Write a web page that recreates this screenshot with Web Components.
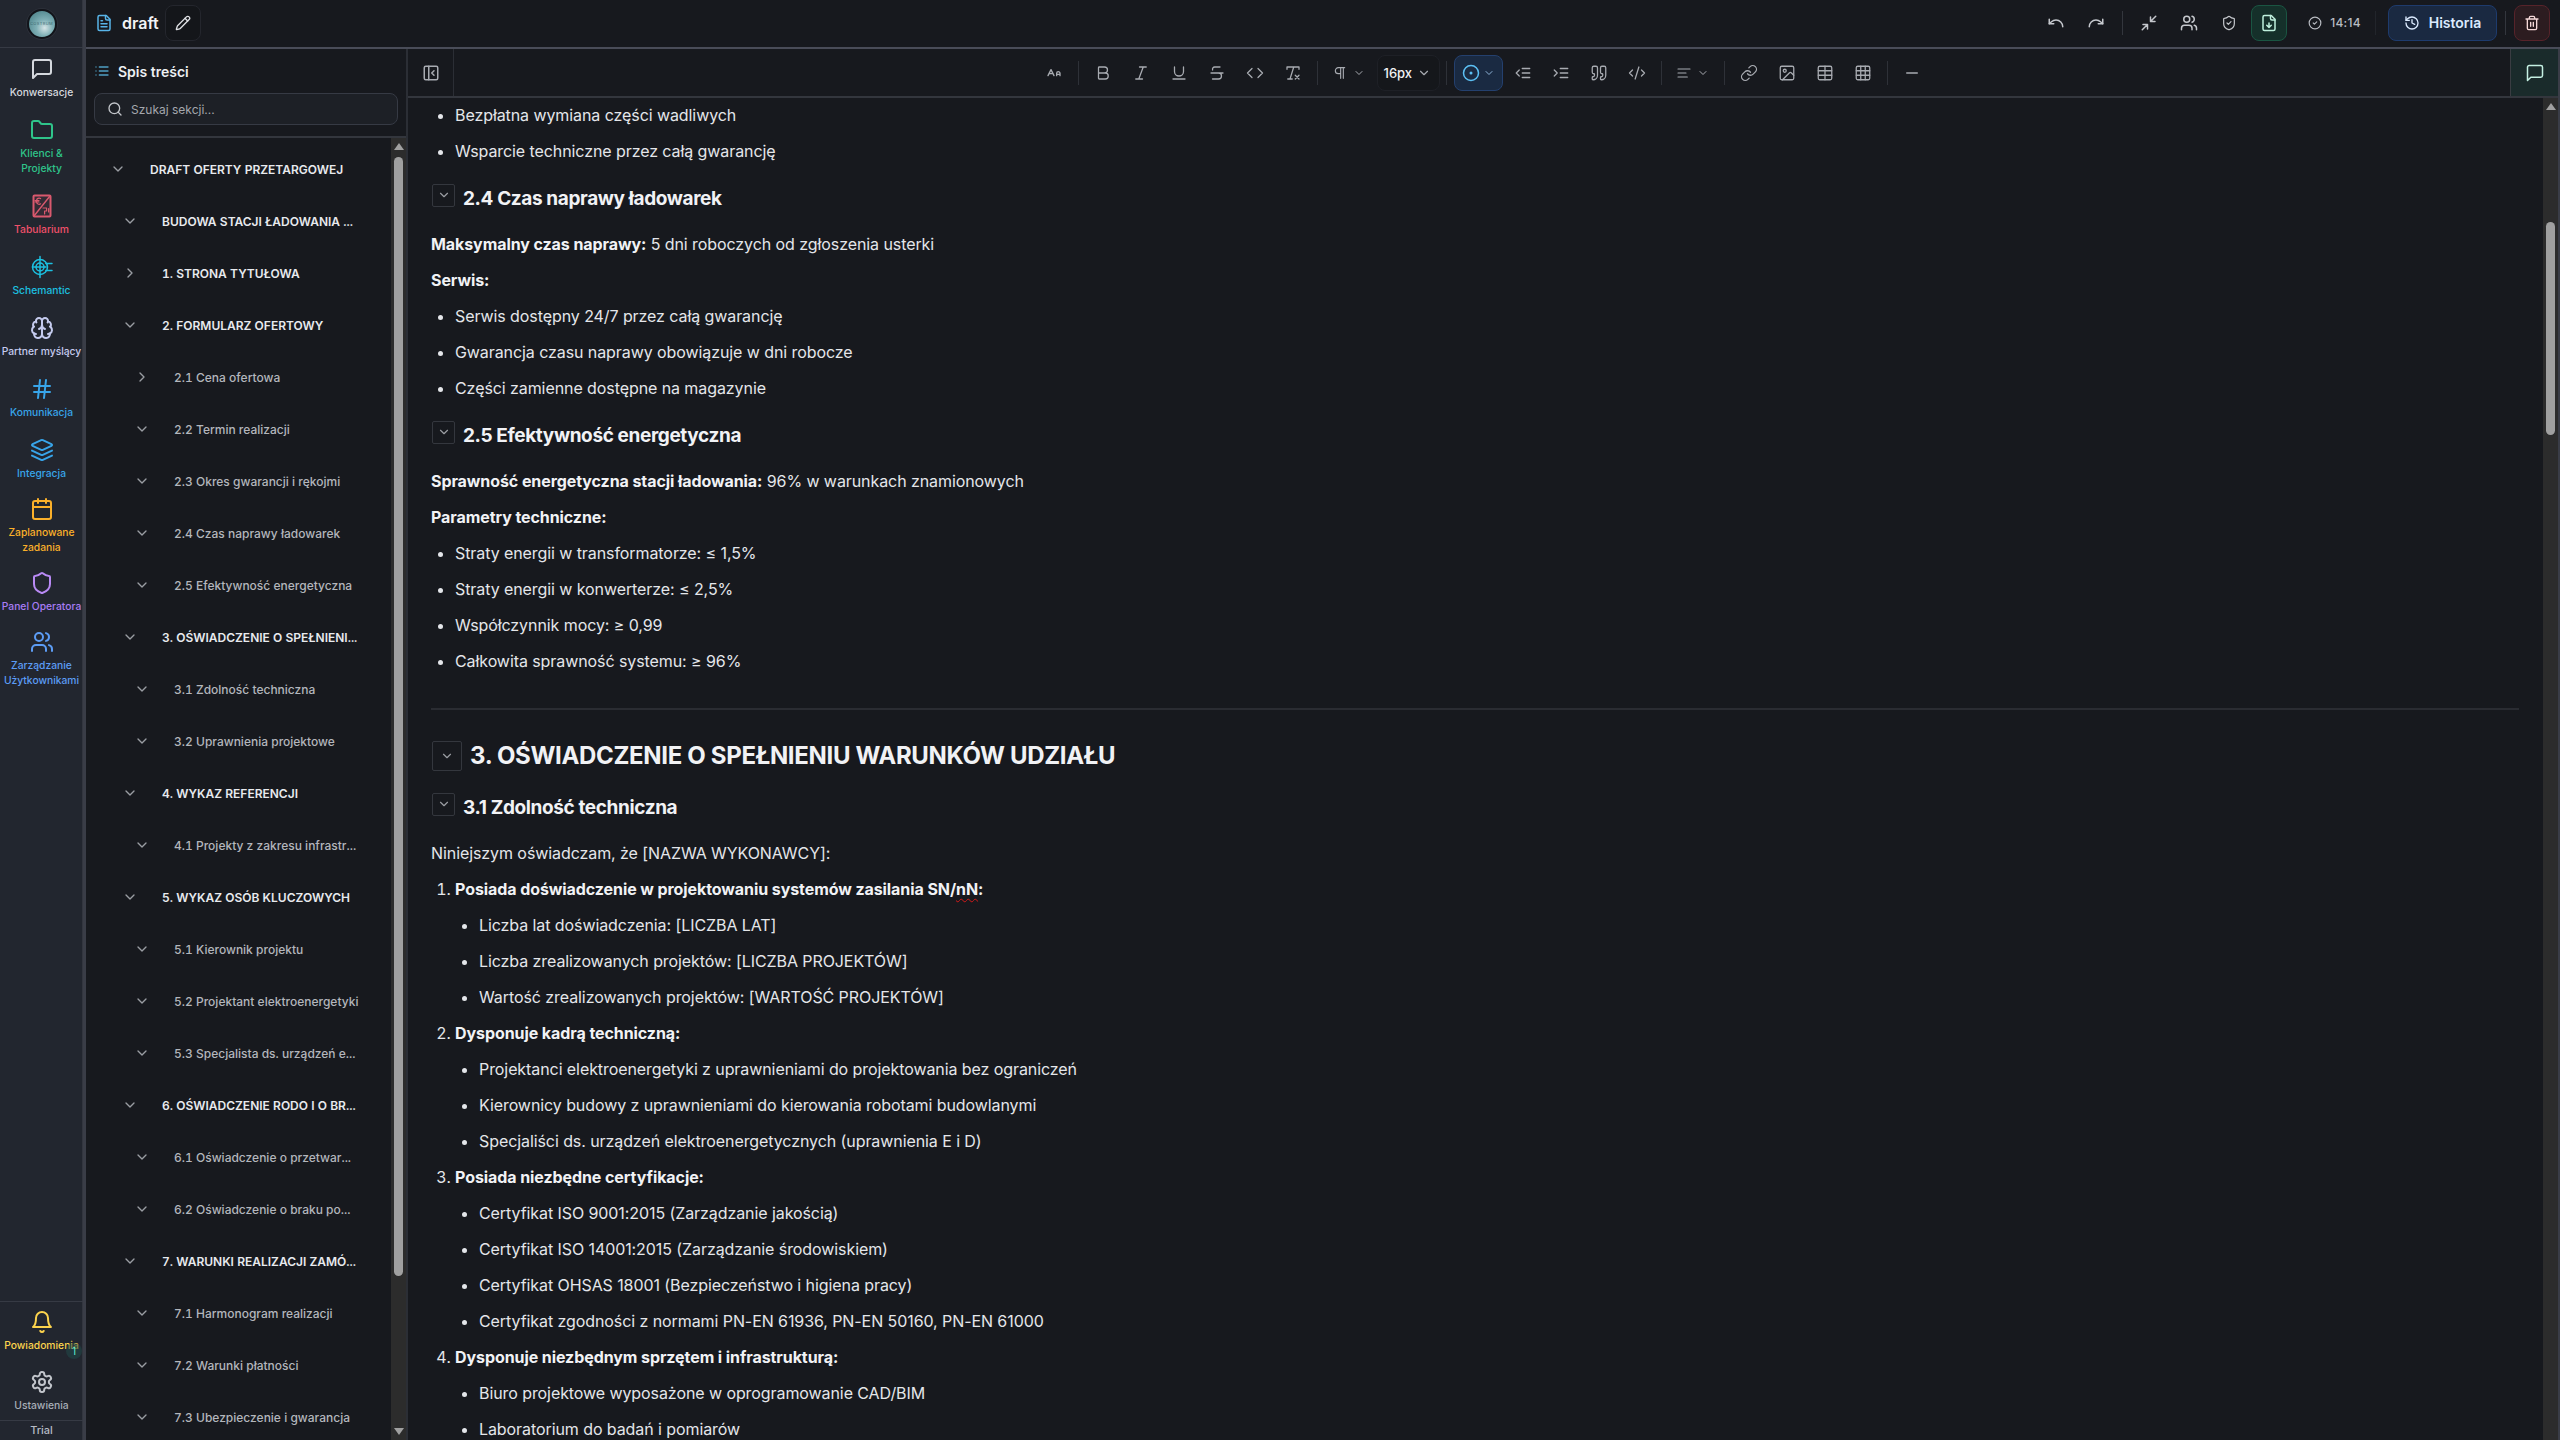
<!DOCTYPE html>
<html lang="pl">
<head>
<meta charset="utf-8">
<title>draft</title>
<style>
  html, body { margin: 0; padding: 0; background: #17191e; }
  body { font-family: Inter, "Noto Sans", sans-serif; }
</style>
</head>
<body>
<app-shell></app-shell>

<script>
const ICONS = {
  message: '<path d="M21 15a2 2 0 0 1-2 2H7l-4 4V5a2 2 0 0 1 2-2h14a2 2 0 0 1 2 2z"/>',
  folder: '<path d="M20 20a2 2 0 0 0 2-2V8a2 2 0 0 0-2-2h-7.9a2 2 0 0 1-1.69-.9L9.6 3.9A2 2 0 0 0 7.93 3H4a2 2 0 0 0-2 2v13a2 2 0 0 0 2 2Z"/>',
  tabularium: '<rect x="3.5" y="1.5" width="17" height="21" rx="1" fill="currentColor" fill-opacity=".1"/><path d="M20 2 4 22" stroke-width="1.4"/><path d="M10.6 4.6a2.6 2.6 0 0 0-4.1 2v1.2a2.6 2.6 0 0 0 4.1 2M5 6.6h4M5 8h4" stroke-width="1.2"/><path d="M13 14h3.6v3h-2v3M18.6 14.6v3.4" stroke-width="1.2"/>',
  schematic: '<circle cx="10" cy="12" r="7.5"/><circle cx="10" cy="12" r="4"/><path d="M10 1.5v21M2.5 12h13.5M15.8 8.5H22M15.8 15.5H22" />',
  brain: '<path d="M12 5a3 3 0 1 0-5.997.125 4 4 0 0 0-2.526 5.77 4 4 0 0 0 .556 6.588A4 4 0 1 0 12 18Z"/><path d="M12 5a3 3 0 1 1 5.997.125 4 4 0 0 1 2.526 5.77 4 4 0 0 1-.556 6.588A4 4 0 1 1 12 18Z"/><path d="M15 13a4.5 4.5 0 0 1-3-4 4.5 4.5 0 0 1-3 4"/><path d="M17.599 6.5a3 3 0 0 0 .399-1.375"/><path d="M6.003 5.125A3 3 0 0 0 6.401 6.5"/><path d="M3.477 10.896a4 4 0 0 1 .585-.396"/><path d="M19.938 10.5a4 4 0 0 1 .585.396"/><path d="M6 18a4 4 0 0 1-1.967-.516"/><path d="M19.967 17.484A4 4 0 0 1 18 18"/>',
  hash: '<path d="M4 9h16M4 15h16M10 3 8 21M16 3l-2 18"/>',
  layers: '<path d="M12.83 2.18a2 2 0 0 0-1.66 0L2.6 6.08a1 1 0 0 0 0 1.83l8.58 3.91a2 2 0 0 0 1.66 0l8.58-3.9a1 1 0 0 0 0-1.83Z"/><path d="m22 17.65-9.17 4.16a2 2 0 0 1-1.66 0L2 17.65"/><path d="m22 12.65-9.17 4.16a2 2 0 0 1-1.66 0L2 12.65"/>',
  calendar: '<rect x="3" y="4" width="18" height="18" rx="2"/><path d="M16 2v4M8 2v4M3 10h18"/>',
  shield: '<path d="M20 13c0 5-3.5 7.5-7.66 8.95a1 1 0 0 1-.67-.01C7.5 20.5 4 18 4 13V6a1 1 0 0 1 1-1c2 0 4.5-1.2 6.24-2.72a1.17 1.17 0 0 1 1.52 0C14.51 3.81 17 5 19 5a1 1 0 0 1 1 1z"/>',
  shieldCheck: '<path d="M20 13c0 5-3.5 7.5-7.66 8.95a1 1 0 0 1-.67-.01C7.5 20.5 4 18 4 13V6a1 1 0 0 1 1-1c2 0 4.5-1.2 6.24-2.72a1.17 1.17 0 0 1 1.52 0C14.51 3.81 17 5 19 5a1 1 0 0 1 1 1z"/><path d="m9 12 2 2 4-4"/>',
  users: '<path d="M16 21v-2a4 4 0 0 0-4-4H6a4 4 0 0 0-4 4v2"/><circle cx="9" cy="7" r="4"/><path d="M22 21v-2a4 4 0 0 0-3-3.87"/><path d="M16 3.13a4 4 0 0 1 0 7.75"/>',
  bell: '<path d="M6 8a6 6 0 0 1 12 0c0 7 3 9 3 9H3s3-2 3-9"/><path d="M10.3 21a1.94 1.94 0 0 0 3.4 0"/>',
  gear: '<path d="M12.22 2h-.44a2 2 0 0 0-2 2v.18a2 2 0 0 1-1 1.73l-.43.25a2 2 0 0 1-2 0l-.15-.08a2 2 0 0 0-2.73.73l-.22.38a2 2 0 0 0 .73 2.73l.15.1a2 2 0 0 1 1 1.72v.51a2 2 0 0 1-1 1.74l-.15.09a2 2 0 0 0-.73 2.73l.22.38a2 2 0 0 0 2.73.73l.15-.08a2 2 0 0 1 2 0l.43.25a2 2 0 0 1 1 1.73V20a2 2 0 0 0 2 2h.44a2 2 0 0 0 2-2v-.18a2 2 0 0 1 1-1.73l.43-.25a2 2 0 0 1 2 0l.15.08a2 2 0 0 0 2.73-.73l.22-.39a2 2 0 0 0-.73-2.73l-.15-.08a2 2 0 0 1-1-1.74v-.5a2 2 0 0 1 1-1.74l.15-.09a2 2 0 0 0 .73-2.73l-.22-.38a2 2 0 0 0-2.73-.73l-.15.08a2 2 0 0 1-2 0l-.43-.25a2 2 0 0 1-1-1.73V4a2 2 0 0 0-2-2z"/><circle cx="12" cy="12" r="3"/>',
  file: '<path d="M15 2H6a2 2 0 0 0-2 2v16a2 2 0 0 0 2 2h12a2 2 0 0 0 2-2V7Z"/><path d="M14 2v4a2 2 0 0 0 2 2h4"/><path d="M10 9H8M16 13H8M16 17H8"/>',
  fileDown: '<path d="M15 2H6a2 2 0 0 0-2 2v16a2 2 0 0 0 2 2h12a2 2 0 0 0 2-2V7Z"/><path d="M14 2v4a2 2 0 0 0 2 2h4"/><path d="M12 18v-6M9 15l3 3 3-3"/>',
  pencil: '<path d="M21.174 6.812a1 1 0 0 0-3.986-3.987L3.842 16.174a2 2 0 0 0-.5.83l-1.321 4.352a.5.5 0 0 0 .623.622l4.353-1.32a2 2 0 0 0 .83-.497z"/><path d="m15 5 4 4"/>',
  list: '<path d="M3 12h.01M3 18h.01M3 6h.01M8 12h13M8 18h13M8 6h13"/>',
  search: '<path d="m21 21-4.34-4.34"/><circle cx="11" cy="11" r="8"/>',
  down: '<path d="m6 9 6 6 6-6"/>',
  right: '<path d="m9 18 6-6-6-6"/>',
  undo: '<path d="M3 7v6h6"/><path d="M21 17a9 9 0 0 0-9-9 9 9 0 0 0-6 2.3L3 13"/>',
  redo: '<path d="M21 7v6h-6"/><path d="M3 17a9 9 0 0 1 9-9 9 9 0 0 1 6 2.3l3 2.7"/>',
  minimize: '<path d="m14 10 7-7M20 10h-6V4M3 21l7-7M4 14h6v6"/>',
  circleCheck: '<circle cx="12" cy="12" r="10"/><path d="m9 12 2 2 4-4"/>',
  history: '<path d="M3 12a9 9 0 1 0 9-9 9.75 9.75 0 0 0-6.74 2.74L3 8"/><path d="M3 3v5h5"/><path d="M12 7v5l4 2"/>',
  trash: '<path d="M3 6h18M19 6v14c0 1-1 2-2 2H7c-1 0-2-1-2-2V6M8 6V4c0-1 1-2 2-2h4c1 0 2 1 2 2v2M10 11v6M14 11v6"/>',
  panelClose: '<rect x="3" y="3" width="18" height="18" rx="2"/><path d="M9 3v18M16 15l-3-3 3-3"/>',
  fontSize: '<path d="M21 14h-5M16 16v-3.5a2.5 2.5 0 0 1 5 0V16M4.5 13h6M3 16l4.5-9 4.5 9"/>',
  bold: '<path d="M6 12h9a4 4 0 0 1 0 8H7a1 1 0 0 1-1-1V5a1 1 0 0 1 1-1h7a4 4 0 0 1 0 8"/>',
  italic: '<path d="M19 4h-9M14 20H5M15 4 9 20"/>',
  underline: '<path d="M6 4v6a6 6 0 0 0 12 0V4M4 20h16"/>',
  strike: '<path d="M16 4H9a3 3 0 0 0-2.83 4M14 12a4 4 0 0 1 0 8H6M4 12h16"/>',
  code: '<path d="m16 18 6-6-6-6M8 6l-6 6 6 6"/>',
  clear: '<path d="M4 7V4h16v3M5 20h6M13 4 8 20M15 15l5 5M20 15l-5 5"/>',
  pilcrow: '<path d="M13 4v16M17 4v16M19 4H9.5a4.5 4.5 0 0 0 0 9H13"/>',
  circleDot: '<circle cx="12" cy="12" r="10"/><circle cx="12" cy="12" r="1"/>',
  outdent: '<path d="M7 8l-4 4 4 4M21 12H11M21 6H11M21 18H11"/>',
  indent: '<path d="M3 8l4 4-4 4M21 12H11M21 6H11M21 18H11"/>',
  quote: '<path d="M16 3a2 2 0 0 0-2 2v6a2 2 0 0 0 2 2 1 1 0 0 1 1 1v1a2 2 0 0 1-2 2 1 1 0 0 0-1 1v2a1 1 0 0 0 1 1 6 6 0 0 0 6-6V5a2 2 0 0 0-2-2z"/><path d="M5 3a2 2 0 0 0-2 2v6a2 2 0 0 0 2 2 1 1 0 0 1 1 1v1a2 2 0 0 1-2 2 1 1 0 0 0-1 1v2a1 1 0 0 0 1 1 6 6 0 0 0 6-6V5a2 2 0 0 0-2-2z"/>',
  codeXml: '<path d="m18 16 4-4-4-4M6 8l-4 4 4 4M14.5 4l-5 16"/>',
  align: '<path d="M21 6H3M15 12H3M17 18H3"/>',
  link: '<path d="M10 13a5 5 0 0 0 7.54.54l3-3a5 5 0 0 0-7.07-7.07l-1.72 1.71"/><path d="M14 11a5 5 0 0 0-7.54-.54l-3 3a5 5 0 0 0 7.07 7.07l1.71-1.71"/>',
  image: '<rect x="3" y="3" width="18" height="18" rx="2"/><circle cx="9" cy="9" r="2"/><path d="m21 15-3.086-3.086a2 2 0 0 0-2.828 0L6 21"/>',
  table: '<rect x="3" y="3" width="18" height="18" rx="2"/><path d="M12 3v18M3 9h18M3 15h18"/>',
  grid: '<rect x="3" y="3" width="18" height="18" rx="2"/><path d="M3 9h18M3 15h18M9 3v18M15 3v18"/>',
  minus: '<path d="M5 12h14"/>',
};

class UiIcon extends HTMLElement {
  constructor() {
    super();
    this.attachShadow({ mode: 'open' });
  }

  connectedCallback() {
    const size = this.getAttribute('size') || 18;
    const width = this.getAttribute('stroke') || 2;
    const color = this.getAttribute('color') || 'currentColor';
    this.shadowRoot.innerHTML = `
      <style>
        :host { display: inline-flex; flex: none; color: ${color}; }
        svg { display: block; fill: none; stroke: currentColor; stroke-linecap: round; stroke-linejoin: round; }
      </style>
      <svg xmlns="http://www.w3.org/2000/svg" viewBox="0 0 24 24" width="${size}" height="${size}" stroke-width="${width}">${ICONS[this.getAttribute('name')] || ''}</svg>`;
  }
}
customElements.define('ui-icon', UiIcon);

class RailItem extends HTMLElement {
  constructor() {
    super();
    this.attachShadow({ mode: 'open' });
  }

  connectedCallback() {
    const color = this.getAttribute('color');
    const iconColor = this.getAttribute('icon-color') || color;
    const stroke = this.getAttribute('icon-stroke') || 2;
    this.shadowRoot.innerHTML = `
      <style>
        :host {
          display: flex;
          flex-direction: column;
          align-items: center;
          position: relative;
          padding: 9px 0 9px;
          color: ${color};
        }
        :host([tight]) { padding-bottom: 7px; }
        :host([lifted]) { padding: 8px 0; }
        ui-icon { margin-bottom: 4px; }
        .label {
          font-size: 10.3px;
          font-weight: 500;
          line-height: 15px;
          text-align: center;
          white-space: pre;
        }
      </style>
      <ui-icon name="${this.getAttribute('icon')}" size="24" stroke="${stroke}" color="${iconColor}"></ui-icon>
      <div class="label">${this.getAttribute('label')}</div>
      <slot></slot>`;
  }
}
customElements.define('rail-item', RailItem);

const railTemplate = document.createElement('template');
railTemplate.innerHTML = `
  <style>
    :host {
      display: flex;
      flex-direction: column;
      flex: none;
      box-sizing: border-box;
      width: 86px;
      height: 1440px;
      background: #22262f;
      border-right: 3px solid #3a3d47;
      box-shadow: inset -1px 0 0 #33363f;
    }
    .logo-cell {
      display: flex;
      align-items: center;
      justify-content: center;
      height: 47px;
      border-bottom: 1px solid #363a44;
      flex: none;
    }
    .logo {
      display: flex;
      align-items: center;
      justify-content: center;
      width: 26px;
      height: 26px;
      border-radius: 50%;
      border: 2px solid #12141a;
      box-shadow: 0 0 0 1px #2c3039;
      background: radial-gradient(circle at 60% 65%, #d6e4e6 0, #7fb0b6 35%, #5c9198 70%, #4a7c84 100%);
      font-size: 4px;
      letter-spacing: .4px;
      color: #3f6c74;
      overflow: hidden;
    }
    .bottom { margin-top: auto; border-top: 1px solid #363a44; }
    .trial {
      height: 19px;
      line-height: 19px;
      border-top: 1px solid #363a44;
      text-align: center;
      font-size: 11px;
      font-weight: 500;
      color: #b5bac3;
    }
    .badge {
      position: absolute;
      right: 1px;
      top: 41px;
      width: 16px;
      height: 16px;
      border-radius: 50%;
      background: rgba(32, 72, 72, .55);
      color: #5eead4;
      font-size: 10px;
      line-height: 16px;
      text-align: center;
    }
  </style>
  <div class="logo-cell"><div class="logo">COSTRUM</div></div>
  <rail-item icon="message" label="Konwersacje" color="#d5d8de"></rail-item>
  <rail-item icon="folder" label="Klienci &amp;&#10;Projekty" color="#2fc48a"></rail-item>
  <rail-item icon="tabularium" label="Tabularium" color="#f0506a" icon-color="#d9596e"></rail-item>
  <rail-item icon="schematic" icon-stroke="1.5" label="Schemantic" color="#1cc0e0"></rail-item>
  <rail-item icon="brain" label="Partner myślący" color="#c5cbee"></rail-item>
  <rail-item icon="hash" label="Komunikacja" color="#38a5ea"></rail-item>
  <rail-item tight icon="layers" label="Integracja" color="#38a5ea"></rail-item>
  <rail-item tight icon="calendar" label="Zaplanowane&#10;zadania" color="#fbb02a"></rail-item>
  <rail-item tight icon="shield" label="Panel Operatora" color="#a87cf5" icon-color="#b98af5"></rail-item>
  <rail-item tight icon="users" label="Zarządzanie&#10;Użytkownikami" color="#5c9cf5"></rail-item>
  <div class="bottom">
    <rail-item lifted icon="bell" label="Powiadomienia" color="#fcd34d"><span class="badge">1</span></rail-item>
    <rail-item tight icon="gear" label="Ustawienia" color="#a8aeb8" icon-color="#c2c5cb"></rail-item>
    <div class="trial">Trial</div>
  </div>
`;

class NavRail extends HTMLElement {
  constructor() {
    super();
    this.attachShadow({ mode: 'open' });
    this.shadowRoot.appendChild(railTemplate.content.cloneNode(true));
  }
}
customElements.define('nav-rail', NavRail);

const topBarTemplate = document.createElement('template');
topBarTemplate.innerHTML = `
  <style>
    :host {
      display: flex;
      align-items: center;
      flex: none;
      box-sizing: border-box;
      height: 49px;
      padding: 0 10px 2px 9px;
      gap: 4px;
      background: #17191e;
      border-bottom: 2px solid #494c58;
      color: #c5c8cd;
    }
    .title { margin: 0 2px 0 5px; font-size: 16px; font-weight: 600; color: #f2f3f5; }
    .btn {
      display: flex;
      align-items: center;
      justify-content: center;
      box-sizing: border-box;
      width: 36px;
      height: 36px;
      border-radius: 8px;
      border: 1px solid transparent;
    }
    .pencil { background: #14161a; border-color: #24262d; color: #dfe1e5; }
    .save { background: #15302a; border-color: #1a5542; color: #bff0dd; }
    .danger { background: #2c1c20; border-color: #57232a; color: #f5d8d8; }
    .spacer { flex: 1; }
    .sep { width: 1px; height: 24px; margin: 0 4px; background: #33363d; }
    .sep.faint { background: #22252b; margin: 0 4px 0 10px; }
    .time {
      display: flex;
      align-items: center;
      gap: 8px;
      margin-left: 17px;
      font-size: 12px;
      font-weight: 500;
      letter-spacing: .3px;
      color: #b9bcc2;
    }
    .history {
      display: flex;
      align-items: center;
      justify-content: center;
      gap: 9px;
      box-sizing: border-box;
      width: 109px;
      height: 36px;
      margin-left: 4px;
      border-radius: 8px;
      background: #1a2941;
      border: 1px solid #1e3b6d;
      color: #dbeafe;
      font-size: 14px;
      font-weight: 600;
    }
  </style>
  <ui-icon name="file" size="18" color="#58b4e8"></ui-icon>
  <span class="title">draft</span>
  <div class="btn pencil"><ui-icon name="pencil" size="16"></ui-icon></div>
  <div class="spacer"></div>
  <div class="btn"><ui-icon name="undo" size="18"></ui-icon></div>
  <div class="btn"><ui-icon name="redo" size="18"></ui-icon></div>
  <div class="sep"></div>
  <div class="btn"><ui-icon name="minimize" size="18"></ui-icon></div>
  <div class="btn"><ui-icon name="users" size="18"></ui-icon></div>
  <div class="btn"><ui-icon name="shieldCheck" size="16" stroke="1.8"></ui-icon></div>
  <div class="btn save"><ui-icon name="fileDown" size="18"></ui-icon></div>
  <div class="time"><ui-icon name="circleCheck" size="14"></ui-icon><span>14:14</span></div>
  <div class="sep faint"></div>
  <div class="history"><ui-icon name="history" size="16"></ui-icon><span>Historia</span></div>
  <div class="sep"></div>
  <div class="btn danger"><ui-icon name="trash" size="16"></ui-icon></div>
`;

class TopBar extends HTMLElement {
  constructor() {
    super();
    this.attachShadow({ mode: 'open' });
    this.shadowRoot.appendChild(topBarTemplate.content.cloneNode(true));
  }
}
customElements.define('top-bar', TopBar);

class ScrollTrack extends HTMLElement {
  constructor() {
    super();
    this.attachShadow({ mode: 'open' });
  }

  connectedCallback() {
    const top = this.getAttribute('thumb-top');
    const height = this.getAttribute('thumb-height');
    const showDown = this.hasAttribute('down');
    this.shadowRoot.innerHTML = `
      <style>
        :host {
          display: flex;
          flex-direction: column;
          align-items: center;
          flex: none;
          width: 15px;
          background: #2c2c2c;
        }
        .up, .dn { width: 0; height: 0; border-left: 5px solid transparent; border-right: 5px solid transparent; flex: none; }
        .up { margin-top: 5px; border-bottom: 7px solid #a0a0a0; }
        .dn { margin-top: auto; margin-bottom: 5px; border-top: 7px solid #a0a0a0; }
        .thumb { width: 9px; flex: none; margin-top: ${top}px; height: ${height}px; border-radius: 5px; background: #a0a0a0; }
      </style>
      <div class="up"></div>
      <div class="thumb"></div>
      ${showDown ? '<div class="dn"></div>' : ''}`;
  }
}
customElements.define('scroll-track', ScrollTrack);

class TocRow extends HTMLElement {
  constructor() {
    super();
    this.attachShadow({ mode: 'open' });
  }

  connectedCallback() {
    const level = Number(this.getAttribute('level'));
    const strong = level < 2;
    this.shadowRoot.innerHTML = `
      <style>
        :host {
          display: flex;
          align-items: center;
          gap: 24px;
          height: 52px;
          padding-left: ${24 + level * 12}px;
          font-size: 12px;
          font-weight: ${strong ? 600 : 500};
          font-variant-numeric: tabular-nums;
          color: ${strong ? '#e8eaee' : '#b3b6bc'};
          white-space: nowrap;
        }
        ui-icon { color: #9a9da3; }
      </style>
      <ui-icon name="${this.hasAttribute('closed') ? 'right' : 'down'}" size="16"></ui-icon>
      <slot></slot>`;
  }
}
customElements.define('toc-row', TocRow);

const tocTemplate = document.createElement('template');
tocTemplate.innerHTML = `
  <style>
    :host {
      display: flex;
      flex-direction: column;
      flex: none;
      box-sizing: border-box;
      width: 322px;
      height: 1391px;
      border-right: 2px solid #2b2e35;
      background: #17191e;
      overflow: hidden;
    }
    .head {
      flex: none;
      box-sizing: border-box;
      height: 89px;
      padding: 0 8px;
      border-bottom: 2px solid #33363d;
    }
    .title {
      display: flex;
      align-items: center;
      gap: 8px;
      height: 44px;
      font-size: 14px;
      font-weight: 600;
      color: #eef0f3;
    }
    .search {
      display: flex;
      align-items: center;
      gap: 8px;
      box-sizing: border-box;
      height: 32px;
      padding-left: 12px;
      border: 1px solid #363a44;
      border-radius: 8px;
      background: #1d2026;
      font-size: 12px;
      color: #a4a7ad;
    }
    .body { display: flex; flex: 1; min-height: 0; }
    .tree { flex: 1; padding-top: 5px; overflow: hidden; }
  </style>
  <div class="head">
    <div class="title"><ui-icon name="list" size="16" color="#4f9fc4"></ui-icon><span>Spis treści</span></div>
    <div class="search"><ui-icon name="search" size="16" color="#c2c5ca"></ui-icon><span>Szukaj sekcji...</span></div>
  </div>
  <div class="body">
    <div class="tree">
      <toc-row level="0">DRAFT OFERTY PRZETARGOWEJ</toc-row>
      <toc-row level="1">BUDOWA STACJI ŁADOWANIA ...</toc-row>
      <toc-row level="1" closed>1. STRONA TYTUŁOWA</toc-row>
      <toc-row level="1">2. FORMULARZ OFERTOWY</toc-row>
      <toc-row level="2" closed>2.1 Cena ofertowa</toc-row>
      <toc-row level="2">2.2 Termin realizacji</toc-row>
      <toc-row level="2">2.3 Okres gwarancji i rękojmi</toc-row>
      <toc-row level="2">2.4 Czas naprawy ładowarek</toc-row>
      <toc-row level="2">2.5 Efektywność energetyczna</toc-row>
      <toc-row level="1">3. OŚWIADCZENIE O SPEŁNIENI...</toc-row>
      <toc-row level="2">3.1 Zdolność techniczna</toc-row>
      <toc-row level="2">3.2 Uprawnienia projektowe</toc-row>
      <toc-row level="1">4. WYKAZ REFERENCJI</toc-row>
      <toc-row level="2">4.1 Projekty z zakresu infrastr...</toc-row>
      <toc-row level="1">5. WYKAZ OSÓB KLUCZOWYCH</toc-row>
      <toc-row level="2">5.1 Kierownik projektu</toc-row>
      <toc-row level="2">5.2 Projektant elektroenergetyki</toc-row>
      <toc-row level="2">5.3 Specjalista ds. urządzeń e...</toc-row>
      <toc-row level="1">6. OŚWIADCZENIE RODO I O BR...</toc-row>
      <toc-row level="2">6.1 Oświadczenie o przetwar...</toc-row>
      <toc-row level="2">6.2 Oświadczenie o braku po...</toc-row>
      <toc-row level="1">7. WARUNKI REALIZACJI ZAMÓ...</toc-row>
      <toc-row level="2">7.1 Harmonogram realizacji</toc-row>
      <toc-row level="2">7.2 Warunki płatności</toc-row>
      <toc-row level="2">7.3 Ubezpieczenie i gwarancja</toc-row>
    </div>
    <scroll-track thumb-top="7" thumb-height="1119" down></scroll-track>
  </div>
`;

class TocPanel extends HTMLElement {
  constructor() {
    super();
    this.attachShadow({ mode: 'open' });
    this.shadowRoot.appendChild(tocTemplate.content.cloneNode(true));
  }
}
customElements.define('toc-panel', TocPanel);

const toolbarTemplate = document.createElement('template');
toolbarTemplate.innerHTML = `
  <style>
    :host {
      display: flex;
      align-items: center;
      flex: none;
      box-sizing: border-box;
      height: 49px;
      border-bottom: 2px solid #33363d;
      background: #17191e;
      color: #a8abb1;
    }
    .toggle {
      display: flex;
      align-items: center;
      justify-content: center;
      flex: none;
      box-sizing: border-box;
      width: 46px;
      height: 47px;
      border-right: 1px solid #2b2e35;
    }
    .tools {
      display: flex;
      align-items: center;
      justify-content: center;
      gap: 2px;
      flex: 1;
      padding-left: 1px;
    }
    .b {
      display: flex;
      align-items: center;
      justify-content: center;
      flex: none;
      box-sizing: border-box;
      width: 36px;
      height: 36px;
      border-radius: 8px;
    }
    .sep { flex: none; width: 1px; height: 24px; margin: 0 4px; background: #2e3138; }
    .menu { width: 50px; justify-content: flex-start; padding-left: 8px; gap: 5px; }
    .size {
      width: 63px;
      margin-left: 1px;
      justify-content: flex-start;
      padding-left: 6px;
      gap: 5px;
      background: #15171b;
      border: 1px solid #1e2026;
      font-size: 13px;
      font-weight: 500;
    }
    .size span { color: #f1f2f4; }
    .active {
      width: 49px;
      margin-left: 1px;
      gap: 3px;
      border: 1px solid #24406e;
      background: #1a2a42;
      color: #8fb4d8;
    }
    .comment {
      display: flex;
      align-items: center;
      justify-content: center;
      flex: none;
      box-sizing: border-box;
      width: 48px;
      height: 47px;
      border-left: 1px solid #3a3d42;
      background: #1a2b2b;
    }
  </style>
  <div class="toggle"><ui-icon name="panelClose" size="18"></ui-icon></div>
  <div class="tools">
    <div class="b"><ui-icon name="fontSize" size="16"></ui-icon></div>
    <div class="sep"></div>
    <div class="b"><ui-icon name="bold" size="18" stroke="1.7"></ui-icon></div>
    <div class="b"><ui-icon name="italic" size="18" stroke="1.7"></ui-icon></div>
    <div class="b"><ui-icon name="underline" size="18" stroke="1.7"></ui-icon></div>
    <div class="b"><ui-icon name="strike" size="18" stroke="1.7"></ui-icon></div>
    <div class="b"><ui-icon name="code" size="18" stroke="1.7"></ui-icon></div>
    <div class="b"><ui-icon name="clear" size="18" stroke="1.7"></ui-icon></div>
    <div class="sep"></div>
    <div class="b menu"><ui-icon name="pilcrow" size="16" stroke="1.7"></ui-icon><ui-icon name="down" size="12"></ui-icon></div>
    <div class="b size"><span>16px</span><ui-icon name="down" size="14"></ui-icon></div>
    <div class="sep"></div>
    <div class="b active"><ui-icon name="circleDot" size="18" color="#5cc0f5"></ui-icon><ui-icon name="down" size="12"></ui-icon></div>
    <div class="b"><ui-icon name="outdent" size="18" stroke="1.7"></ui-icon></div>
    <div class="b"><ui-icon name="indent" size="18" stroke="1.7"></ui-icon></div>
    <div class="b"><ui-icon name="quote" size="18" stroke="1.7"></ui-icon></div>
    <div class="b"><ui-icon name="codeXml" size="18" stroke="1.7"></ui-icon></div>
    <div class="sep"></div>
    <div class="b menu"><ui-icon name="align" size="16" stroke="1.7"></ui-icon><ui-icon name="down" size="12"></ui-icon></div>
    <div class="sep"></div>
    <div class="b"><ui-icon name="link" size="18" stroke="1.7"></ui-icon></div>
    <div class="b"><ui-icon name="image" size="18" stroke="1.7"></ui-icon></div>
    <div class="b"><ui-icon name="table" size="18" stroke="1.7"></ui-icon></div>
    <div class="b"><ui-icon name="grid" size="18" stroke="1.7"></ui-icon></div>
    <div class="sep"></div>
    <div class="b"><ui-icon name="minus" size="18"></ui-icon></div>
  </div>
  <div class="comment"><ui-icon name="message" size="20" stroke="1.8" color="#c4f0e2"></ui-icon></div>
`;

class EditorToolbar extends HTMLElement {
  constructor() {
    super();
    this.attachShadow({ mode: 'open' });
    this.shadowRoot.appendChild(toolbarTemplate.content.cloneNode(true));
  }
}
customElements.define('editor-toolbar', EditorToolbar);

class DocHeading extends HTMLElement {
  constructor() {
    super();
    this.attachShadow({ mode: 'open' });
  }

  connectedCallback() {
    const big = this.getAttribute('level') === '2';
    this.shadowRoot.innerHTML = `
      <style>
        :host {
          display: flex;
          align-items: flex-start;
          gap: 8px;
          color: #f1f2f5;
          font-weight: 700;
          font-size: ${big ? 24 : 19}px;
          letter-spacing: ${big ? -0.33 : -0.38}px;
          line-height: ${big ? 36 : 30}px;
          padding: ${big ? '0' : '14.5px 0 12.5px'};
          margin-left: 1px;
        }
        .fold {
          display: flex;
          align-items: center;
          justify-content: center;
          flex: none;
          box-sizing: border-box;
          width: ${big ? 30 : 23}px;
          height: ${big ? 30 : 23}px;
          margin-top: ${big ? 3 : 0}px;
          border: 1px solid #34373e;
          border-radius: 2px;
          color: #9a9da3;
        }
      </style>
      <div class="fold"><ui-icon name="down" size="14"></ui-icon></div>
      <slot></slot>`;
  }
}
customElements.define('doc-heading', DocHeading);

const docTemplate = document.createElement('template');
docTemplate.innerHTML = `
  <style>
    :host {
      display: block;
      flex: 1;
      min-width: 0;
      box-sizing: border-box;
      padding: 0 24px 0 23px;
      overflow: hidden;
      font-size: 16px;
      letter-spacing: -0.08px;
      line-height: 36px;
      color: #e4e6ea;
    }
    p { margin: 0; }
    ul, ol { margin: 0; padding: 0 0 0 24px; }
    ul { list-style: disc; }
    strong { font-weight: 700; color: #f1f2f5; }
    .first { margin-top: -1px; }
    hr { margin: 29px 0 28px; height: 2px; border: 0; background: #2a2c32; }
    doc-heading[level="2"] { margin-bottom: 4px; }
    .typo { text-decoration: underline wavy #d01818 1px; text-underline-offset: 3px; }
  </style>
  <ul class="first">
    <li>Bezpłatna wymiana części wadliwych</li>
    <li>Wsparcie techniczne przez całą gwarancję</li>
  </ul>
  <doc-heading level="3">2.4 Czas naprawy ładowarek</doc-heading>
  <p><strong>Maksymalny czas naprawy:</strong> 5 dni roboczych od zgłoszenia usterki</p>
  <p><strong>Serwis:</strong></p>
  <ul>
    <li>Serwis dostępny 24/7 przez całą gwarancję</li>
    <li>Gwarancja czasu naprawy obowiązuje w dni robocze</li>
    <li>Części zamienne dostępne na magazynie</li>
  </ul>
  <doc-heading level="3">2.5 Efektywność energetyczna</doc-heading>
  <p><strong>Sprawność energetyczna stacji ładowania:</strong> 96% w warunkach znamionowych</p>
  <p><strong>Parametry techniczne:</strong></p>
  <ul>
    <li>Straty energii w transformatorze: ≤ 1,5%</li>
    <li>Straty energii w konwerterze: ≤ 2,5%</li>
    <li>Współczynnik mocy: ≥ 0,99</li>
    <li>Całkowita sprawność systemu: ≥ 96%</li>
  </ul>
  <hr>
  <doc-heading level="2">3. OŚWIADCZENIE O SPEŁNIENIU WARUNKÓW UDZIAŁU</doc-heading>
  <doc-heading level="3">3.1 Zdolność techniczna</doc-heading>
  <p>Niniejszym oświadczam, że [NAZWA WYKONAWCY]:</p>
  <ol>
    <li><strong>Posiada doświadczenie w projektowaniu systemów zasilania SN/<span class="typo">nN</span>:</strong>
      <ul>
        <li>Liczba lat doświadczenia: [LICZBA LAT]</li>
        <li>Liczba zrealizowanych projektów: [LICZBA PROJEKTÓW]</li>
        <li>Wartość zrealizowanych projektów: [WARTOŚĆ PROJEKTÓW]</li>
      </ul>
    </li>
    <li><strong>Dysponuje kadrą techniczną:</strong>
      <ul>
        <li>Projektanci elektroenergetyki z uprawnieniami do projektowania bez ograniczeń</li>
        <li>Kierownicy budowy z uprawnieniami do kierowania robotami budowlanymi</li>
        <li>Specjaliści ds. urządzeń elektroenergetycznych (uprawnienia E i D)</li>
      </ul>
    </li>
    <li><strong>Posiada niezbędne certyfikacje:</strong>
      <ul>
        <li>Certyfikat ISO 9001:2015 (Zarządzanie jakością)</li>
        <li>Certyfikat ISO 14001:2015 (Zarządzanie środowiskiem)</li>
        <li>Certyfikat OHSAS 18001 (Bezpieczeństwo i higiena pracy)</li>
        <li>Certyfikat zgodności z normami PN-EN 61936, PN-EN 50160, PN-EN 61000</li>
      </ul>
    </li>
    <li><strong>Dysponuje niezbędnym sprzętem i infrastrukturą:</strong>
      <ul>
        <li>Biuro projektowe wyposażone w oprogramowanie CAD/BIM</li>
        <li>Laboratorium do badań i pomiarów</li>
      </ul>
    </li>
  </ol>
`;

class EditorDoc extends HTMLElement {
  constructor() {
    super();
    this.attachShadow({ mode: 'open' });
    this.shadowRoot.appendChild(docTemplate.content.cloneNode(true));
  }
}
customElements.define('editor-doc', EditorDoc);

const editorTemplate = document.createElement('template');
editorTemplate.innerHTML = `
  <style>
    :host {
      display: flex;
      flex-direction: column;
      flex: 1;
      min-width: 0;
      height: 1391px;
      box-sizing: border-box;
      border-right: 2px solid #3a3d47;
      overflow: hidden;
    }
    .body { display: flex; flex: 1; min-height: 0; background: #17191e; }
  </style>
  <editor-toolbar></editor-toolbar>
  <div class="body">
    <editor-doc></editor-doc>
    <scroll-track thumb-top="112" thumb-height="213"></scroll-track>
  </div>
`;

class EditorPane extends HTMLElement {
  constructor() {
    super();
    this.attachShadow({ mode: 'open' });
    this.shadowRoot.appendChild(editorTemplate.content.cloneNode(true));
  }
}
customElements.define('editor-pane', EditorPane);

const shellTemplate = document.createElement('template');
shellTemplate.innerHTML = `
  <style>
    :host {
      display: flex;
      width: 2560px;
      height: 1440px;
      overflow: hidden;
      font-family: Inter, "Noto Sans", sans-serif;
    }
    .main { display: flex; flex-direction: column; flex: 1; min-width: 0; }
    .split { display: flex; flex: 1; min-height: 0; }
  </style>
  <nav-rail></nav-rail>
  <div class="main">
    <top-bar></top-bar>
    <div class="split">
      <toc-panel></toc-panel>
      <editor-pane></editor-pane>
    </div>
  </div>
`;

class AppShell extends HTMLElement {
  constructor() {
    super();
    this.attachShadow({ mode: 'open' });
    this.shadowRoot.appendChild(shellTemplate.content.cloneNode(true));
  }
}
customElements.define('app-shell', AppShell);
</script>
</body>
</html>
